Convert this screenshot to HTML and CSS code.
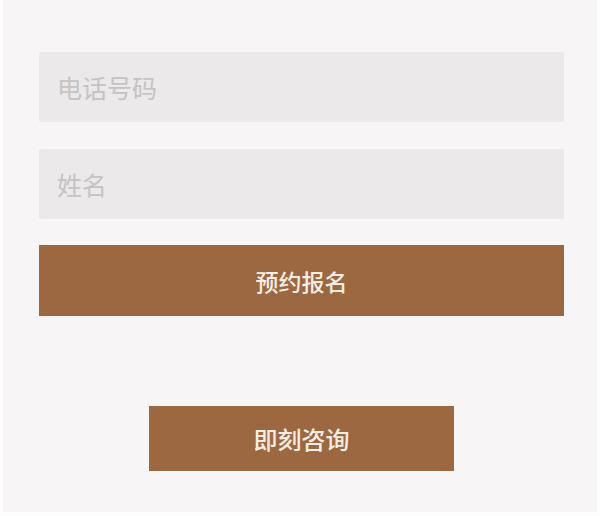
FILE: index.html
```html
<!DOCTYPE html>
<html lang="zh-CN">

<head>
    <meta charset="UTF-8">
    <meta name="viewport" content="width=device-width, initial-scale=1.0">
    <title>预约报名</title>
    <link rel="stylesheet" href="styles.css">
</head>

<body>
    <div class="page">
        <form class="form">
            <input class="field" type="tel" placeholder="电话号码">
            <input class="field" type="text" placeholder="姓名">
            <button class="submit" type="button">预约报名</button>
        </form>
        <div class="consult">
            <a href="" class="consult-btn">即刻咨询</a>
        </div>
    </div>
</body>

</html>
```

FILE: styles.css
```css
html,
body {
    margin: 0;
    padding: 0;
    background-color: #fdfdfd;
}

body {
    font-family: "Noto Sans CJK SC", "Noto Sans", sans-serif;
}

.page {
    height: 460px;
    margin: 0 3px 0 3px;
    padding-top: 52px;
    background-color: #f7f5f6;
}

.form {
    width: 525px;
    margin-left: 36px;
    display: flex;
    flex-direction: column;
}

.field {
    height: 70px;
    margin: 0 0 27px 0;
    padding: 0 0 0 18px;
    box-sizing: border-box;
    border: none;
    border-radius: 2px;
    outline: none;
    background-color: #ebe9ea;
    font-family: inherit;
    font-size: 25px;
    color: #555;
}

.field:nth-of-type(2) {
    margin-bottom: 26px;
}

.field::placeholder {
    color: #c5c3c4;
}

.submit {
    height: 71px;
    border: none;
    background-color: #9c6842;
    color: #f6eee4;
    font-family: inherit;
    font-size: 23px;
    font-weight: 500;
    cursor: pointer;
}

.consult {
    display: flex;
    justify-content: center;
    margin-top: 90px;
    padding-left: 3px;
}

.consult-btn {
    width: 305px;
    height: 65px;
    display: flex;
    align-items: center;
    justify-content: center;
    background-color: #9c6842;
    color: #f6eee4;
    font-size: 24px;
    font-weight: 500;
    text-decoration: none;
}
```
